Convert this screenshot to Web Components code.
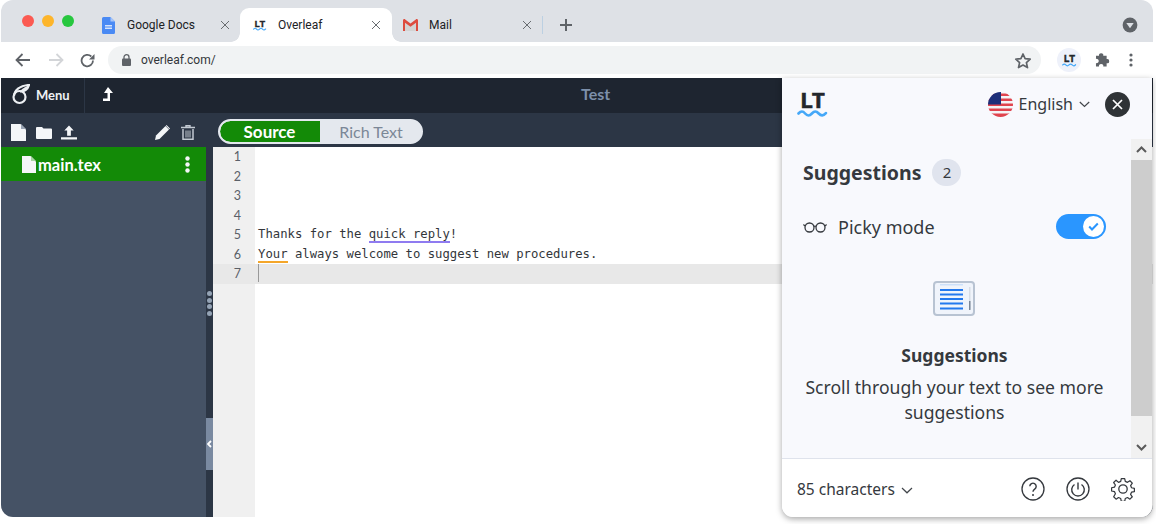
<!DOCTYPE html>
<html>
<head>
<meta charset="utf-8">
<title>Overleaf</title>
<style>
  html, body { margin: 0; background: #fff; }
  body { width: 1156px; height: 524px; overflow: hidden; font-family: Roboto, sans-serif; }
</style>
</head>
<body>
<browser-window>
  <tab-strip slot="tabs">
    <browser-tab icon="docs" label="Google Docs"></browser-tab>
    <browser-tab icon="lt" label="Overleaf" active></browser-tab>
    <browser-tab icon="gmail" label="Mail" last></browser-tab>
  </tab-strip>
  <address-bar slot="address" url="overleaf.com/"></address-bar>
  <overleaf-app slot="page"></overleaf-app>
  <lt-panel slot="overlay"></lt-panel>
</browser-window>

<script>
const LT_LOGO = (w, h) => `
  <svg width="${w}" height="${h}" viewBox="0 0 32 26">
    <text x="3" y="16.500" font-family="Liberation Mono, monospace" font-weight="700" font-size="22" textLength="25" lengthAdjust="spacing" fill="#24272b" stroke="#24272b" stroke-width=".7">LT</text>
    <path d="M1.500 22.500c2.400-2.600 4.400-2.600 6.600 0s4.400 2.600 6.800 0 4.400-2.600 6.800 0 4.600 2.600 7.200-.4" fill="none" stroke="#45a8f8" stroke-width="2.600" stroke-linecap="round"/>
  </svg>`;

class BrowserWindow extends HTMLElement {
  constructor() {
    super();
    this.shadowDOM = this.attachShadow({ mode: 'open' });
  }

  connectedCallback() {
    this.shadowDOM.innerHTML = `
      <style>
        :host { display: flex; flex-direction: column; position: relative; width: 1152px; height: 517px; margin-left: 1px; }
        .top { border-radius: 12px 12px 0 0; overflow: hidden; flex: none; }
        .page { flex: 1; min-height: 0; display: flex; border-radius: 0 0 12px 12px; overflow: hidden; }
        ::slotted([slot=page]) { flex: 1; }
        ::slotted([slot=overlay]) { position: absolute; left: 781px; top: 78px; }
      </style>
      <div class="top"><slot name="tabs"></slot><slot name="address"></slot></div>
      <div class="page"><slot name="page"></slot></div>
      <slot name="overlay"></slot>
    `;
  }
}

class TabStrip extends HTMLElement {
  constructor() {
    super();
    this.shadowDOM = this.attachShadow({ mode: 'open' });
  }

  connectedCallback() {
    this.shadowDOM.innerHTML = `
      <style>
        :host { display: flex; align-items: flex-end; height: 42px; background: #dee1e6; padding-left: 86px; box-sizing: border-box; }
        .lights { position: absolute; left: 21px; top: 15px; display: flex; gap: 8px; }
        .lights i { width: 12px; height: 12px; border-radius: 50%; }
        .sep { width: 1px; height: 18px; background: #bcd0e2; align-self: center; margin: 8px 0 0 0; }
        .plus { margin: 8px 0 0 16px; align-self: center; display: flex; }
        .menu { margin: 8px 15px 0 auto; align-self: center; display: flex; }
      </style>
      <div class="lights">
        <i style="background:#fb5a52"></i><i style="background:#fdb52b"></i><i style="background:#27c73f"></i>
      </div>
      <slot></slot>
      <div class="sep"></div>
      <div class="plus">
        <svg width="14" height="14" viewBox="0 0 14 14"><path d="M7 1v12M1 7h12" stroke="#5f6368" stroke-width="2"/></svg>
      </div>
      <div class="menu">
        <svg width="16" height="16" viewBox="0 0 16 16"><circle cx="8" cy="8" r="7.400" fill="#5f6368"/><path d="M4.300 6h7.400L8 11.200z" fill="#dee1e6"/></svg>
      </div>
    `;
  }
}

class BrowserTab extends HTMLElement {
  constructor() {
    super();
    this.shadowDOM = this.attachShadow({ mode: 'open' });
  }

  icon() {
    const name = this.getAttribute('icon');
    if (name === 'docs') {
      return `<svg width="13" height="17" viewBox="0 0 13 17"><path d="M1.500 0H8.500L13 4.500V15.500a1.500 1.500 0 0 1-1.500 1.500H1.500A1.500 1.500 0 0 1 0 15.500V1.500A1.500 1.500 0 0 1 1.500 0z" fill="#4a8af4"/><path d="M8.500 0L13 4.500H8.500z" fill="#a6c5fa"/><path d="M3 8h7v1.500H3zM3 10.500h7V12H3z" fill="#d5e3fc"/></svg>`;
    }
    if (name === 'lt') {
      return LT_LOGO(14, 12);
    }
    return `<svg width="15" height="12" viewBox="0 0 15 12"><path d="M2 2.500L7.500 6.500 13 2.500V12H2z" fill="#d3d3d3"/><path d="M0 1.500C0 .3 1.200-.3 2.200.4L7.500 4.500 12.800.4c1-.7 2.200-.1 2.200 1.100V12h-2V3.800L7.500 7.800 2 3.800V12H0z" fill="#dd4b3e"/></svg>`;
  }

  connectedCallback() {
    this.shadowDOM.innerHTML = `
      <style>
        :host { display: flex; align-items: center; position: relative; width: 152px; height: 34px; box-sizing: border-box; padding: 0 9px 0 15px; font: 12px Roboto, sans-serif; color: #202124; }
        :host([active]) { background: #fff; border-radius: 9px 9px 0 0; padding: 0 11px 0 13px; margin-left: 1px; }
        :host([last]) { width: 150px; padding: 0 10px 0 11px; }
        :host([active])::before, :host([active])::after { content: ''; position: absolute; bottom: 0; width: 9px; height: 9px; }
        :host([active])::before { left: -9px; background: radial-gradient(circle at 0 0, transparent 8.500px, #fff 9px); }
        :host([active])::after { right: -9px; background: radial-gradient(circle at 100% 0, transparent 8.500px, #fff 9px); }
        .icon { width: 25px; flex: none; display: flex; align-items: center; }
        :host([last]) .icon { width: 26px; }
        .label { flex: 1; white-space: nowrap; }
        .x { flex: none; display: flex; }
      </style>
      <span class="icon">${this.icon()}</span>
      <span class="label">${this.getAttribute('label')}</span>
      <span class="x"><svg width="10" height="10" viewBox="0 0 10 10"><path d="M1 1l8 8M9 1L1 9" stroke="#686c70" stroke-width="1"/></svg></span>
    `;
  }
}

class AddressBar extends HTMLElement {
  constructor() {
    super();
    this.shadowDOM = this.attachShadow({ mode: 'open' });
  }

  connectedCallback() {
    this.shadowDOM.innerHTML = `
      <style>
        :host { display: flex; align-items: center; height: 36px; background: #fff; padding: 0 20px 0 14px; box-sizing: border-box; }
        .nav { display: flex; align-items: center; gap: 17px; width: 93px; flex: none; }
        .nav svg { display: block; }
        .nav svg:last-child { margin-left: -1px; }
        .url { flex: 1; height: 28px; background: #f1f3f4; border-radius: 14px; display: flex; align-items: center; padding: 0 9px 0 14px; box-sizing: border-box; font: 12px Roboto, sans-serif; color: #33363a; }
        .lock { margin-right: 10px; display: flex; }
        .star { margin-left: auto; display: flex; }
        .ext { display: flex; align-items: center; flex: none; margin-left: 16px; }
        .lt { width: 24px; height: 24px; border-radius: 50%; background: #eef1fa; display: flex; align-items: center; justify-content: center; }
        .puzzle { margin-left: 14px; display: flex; }
        .dots { margin-left: 18px; display: flex; }
      </style>
      <div class="nav">
        <svg width="16" height="14" viewBox="0 0 16 14"><path d="M15 7H2M7.500 1L1.500 7l6 6" fill="none" stroke="#5f6368" stroke-width="1.800"/></svg>
        <svg width="16" height="14" viewBox="0 0 16 14"><path d="M1 7h13M8.500 1l6 6-6 6" fill="none" stroke="#d3d5d8" stroke-width="1.800"/></svg>
        <svg width="15" height="15" viewBox="0 0 15 15"><path d="M13 7.500a5.700 5.700 0 1 1-1.700-4" fill="none" stroke="#5f6368" stroke-width="1.800"/><path d="M14.500 1v5.500H9z" fill="#5f6368"/></svg>
      </div>
      <div class="url">
        <span class="lock"><svg width="9" height="12" viewBox="0 0 9 12"><path d="M2 5V3.200a2.500 2.500 0 0 1 5 0V5" fill="none" stroke="#5f6368" stroke-width="1.300"/><rect y="4.500" width="9" height="7.500" rx="1" fill="#5f6368"/></svg></span>
        <span>${this.getAttribute('url')}</span>
        <span class="star"><svg width="18" height="17" viewBox="0 0 18 17"><path d="M9 2l2.100 4.700 5.100.5-3.800 3.400 1.100 5L9 13l-4.500 2.600 1.100-5L1.800 7.200l5.100-.5z" fill="none" stroke="#5f6368" stroke-width="1.700" stroke-linejoin="round"/></svg></span>
      </div>
      <div class="ext">
        <span class="lt">${LT_LOGO(15, 13)}</span>
        <span class="puzzle"><svg width="16" height="16" viewBox="0 0 16 16"><path d="M1 5h3.200a2.200 2.200 0 1 1 4.300 0H12v3.300a2.200 2.200 0 1 1 0 4.300V16H8.500a2.200 2.200 0 1 0-4.300 0H1v-3.600a2.200 2.200 0 1 0 0-4.200z" fill="#5f6368" transform="translate(0 -1) scale(.97)"/></svg></span>
        <span class="dots"><svg width="4" height="14" viewBox="0 0 4 14"><circle cx="2" cy="2" r="1.600" fill="#5f6368"/><circle cx="2" cy="7" r="1.600" fill="#5f6368"/><circle cx="2" cy="12" r="1.600" fill="#5f6368"/></svg></span>
      </div>
    `;
  }
}

class OverleafApp extends HTMLElement {
  constructor() {
    super();
    this.shadowDOM = this.attachShadow({ mode: 'open' });
  }

  connectedCallback() {
    this.shadowDOM.innerHTML = `
      <style>
        :host { display: flex; flex-direction: column; font-family: Lato, sans-serif; min-width: 0; }
        .bar { height: 35px; background: #1e2530; display: flex; align-items: center; flex: none; color: #fff; position: relative; }
        .menu { display: flex; align-items: center; width: 84px; height: 100%; padding: 0 0 2px 10px; box-sizing: border-box; border-right: 1px solid #2c3645; font-size: 13px; font-weight: 700; color: #eef1f4; gap: 6px; }
        .up { margin: 0 0 3px 17px; display: flex; }
        .title { position: absolute; left: 580px; top: 6px; font-size: 16px; font-weight: 700; color: #7d90aa; }
        .main { flex: 1; display: flex; min-height: 0; }
      </style>
      <div class="bar">
        <div class="menu">
          <svg width="19" height="21" viewBox="0 0 19 21"><circle cx="8.500" cy="13" r="6" fill="none" stroke="#eceff2" stroke-width="2.200"/><path d="M3 12C3.500 6 9 1.500 18 1c-1 3.500-3.500 6.500-9 6.500" fill="none" stroke="#eceff2" stroke-width="2.200"/><path d="M9 7c3-3 6-4.500 9-6-1 3.500-4 6-9 6z" fill="#eceff2"/></svg>
          <span>Menu</span>
        </div>
        <span class="up"><svg width="11" height="14" viewBox="0 0 11 14"><path d="M6 0l5 6H8v8H1v-2.500h4.500V6H2z" fill="#fff"/></svg></span>
        <span class="title">Test</span>
      </div>
      <div class="main">
        <file-tree></file-tree>
        <code-editor></code-editor>
      </div>
    `;
  }
}

class FileTree extends HTMLElement {
  constructor() {
    super();
    this.shadowDOM = this.attachShadow({ mode: 'open' });
  }

  connectedCallback() {
    this.shadowDOM.innerHTML = `
      <style>
        :host { display: flex; flex-direction: column; width: 205px; flex: none; background: #455265; font-family: Lato, sans-serif; }
        .tools { height: 34px; background: #2c3645; display: flex; align-items: center; padding: 4px 11px 0 10px; box-sizing: border-box; gap: 10px; flex: none; }
        .tools .right { margin-left: auto; display: flex; gap: 11px; align-items: center; }
        svg { display: block; }
        .file { height: 34px; background: #138a07; display: flex; align-items: center; padding: 1px 16px 0 21px; box-sizing: border-box; color: #fff; font-size: 16.500px; font-weight: 700; }
        .file span { margin-left: 2px; }
        .more { margin-left: auto; }
      </style>
      <div class="tools">
        <svg width="15" height="17" viewBox="0 0 15 17"><path d="M0 0h9.500L15 5.500V17H0z" fill="#f4f6f8"/><path d="M10 0l5 5h-5z" fill="#9aa5b4"/></svg>
        <svg width="16" height="13" viewBox="0 0 16 13"><path d="M0 2a1 1 0 0 1 1-1h5l1.500 1.500H15a1 1 0 0 1 1 1V12a1 1 0 0 1-1 1H1a1 1 0 0 1-1-1z" fill="#f4f6f8"/></svg>
        <svg width="16" height="15" viewBox="0 0 17 15" style="margin-left:-1px"><path d="M8.500 0l5 5.500H10.500V11h-4V5.500H3.500zM0 12.500h17V15H0z" fill="#f4f6f8"/></svg>
        <div class="right">
          <svg width="15" height="15" viewBox="0 0 15 15"><path d="M0 15l1-4.500L10.500 1l3.500 3.500L4.500 14z" fill="#f4f6f8"/><path d="M11.500 0l3.500 3.500-.7.700L10.800.7z" fill="#f4f6f8"/></svg>
          <svg width="14" height="15" viewBox="0 0 14 15"><path d="M0 2.500h14M5 2.500V.800h4v1.700" fill="none" stroke="#c2c9d2" stroke-width="1.400"/><path d="M2 4v10.300h10V4" fill="none" stroke="#c2c9d2" stroke-width="1.500"/><path d="M5 5.500v7M7 5.500v7M9 5.500v7" stroke="#c2c9d2"/></svg>
        </div>
      </div>
      <div class="file">
        <svg width="14" height="17" viewBox="0 0 14 17"><path d="M0 0h8.500L14 5.500V17H0z" fill="#f4f6f8"/><path d="M9 0l5 5H9z" fill="#a6d3a2"/></svg>
        <span>main.tex</span>
        <svg class="more" width="5" height="17" viewBox="0 0 5 17"><circle cx="2.500" cy="2.500" r="2.200" fill="#f4f6f8"/><circle cx="2.500" cy="8.500" r="2.200" fill="#f4f6f8"/><circle cx="2.500" cy="14.500" r="2.200" fill="#f4f6f8"/></svg>
      </div>
    `;
  }
}

class CodeEditor extends HTMLElement {
  constructor() {
    super();
    this.shadowDOM = this.attachShadow({ mode: 'open' });
  }

  connectedCallback() {
    const lines = [
      '', '', '', '',
      'Thanks for the <u class="style">quick reply</u>!',
      '<u class="grammar">Your</u> always welcome to suggest new procedures.',
      '<i class="caret"></i>',
    ];
    const rows = lines.map((text, i) => `
      <div class="row${i === 6 ? ' current' : ''}"><span class="num">${i + 1}</span><span class="code">${text}</span></div>`).join('');
    this.shadowDOM.innerHTML = `
      <style>
        :host { display: flex; flex: 1; min-width: 0; background: #2c3645; }
        .handle { width: 7px; flex: none; position: relative; }
        .grip { position: absolute; top: 178px; left: 1px; display: flex; flex-direction: column; gap: 1.500px; }
        .grip i { width: 5px; height: 5px; border-radius: 50%; background: #94a3b5; }
        .toggle { position: absolute; left: 0; top: 305px; width: 7px; height: 52px; background: #7a8aa1; color: #fff; display: flex; align-items: center; justify-content: center; }
        .pane { flex: 1; display: flex; flex-direction: column; min-width: 0; }
        .tabs { height: 34px; flex: none; padding-left: 5px; box-sizing: border-box; display: flex; align-items: flex-start; padding-top: 6px; }
        .pill { display: flex; width: 205px; height: 25px; box-sizing: border-box; border: 2px solid #e4e8ee; border-radius: 13px; background: #e4e8ee; overflow: hidden; font-size: 16px; line-height: 21px; text-align: center; }
        .source { width: 100px; background: #138a07; color: #fff; font-weight: 700; font-size: 17px; padding-right: 1px; box-sizing: border-box; border-radius: 11px 0 0 11px; }
        .rich { flex: 1; color: #7b8797; padding-left: 1px; }
        .lines { flex: 1; background: #fff; position: relative; font: 12.250px/19.500px "DejaVu Sans Mono", monospace; color: #33363a; }
        .gutter-bg { position: absolute; left: 0; top: 0; bottom: 0; width: 42px; background: #f0f0f0; }
        .row { display: flex; height: 19.500px; position: relative; white-space: pre; }
        .row.current { background: #e8e8e8; }
        .num { width: 28px; flex: none; text-align: right; color: #5a6068; font-family: Lato, sans-serif; font-size: 12.500px; }
        .code { margin-left: 17px; }
        u { text-decoration: none; display: inline-block; position: relative; }
        u::after { content: ''; position: absolute; left: 0; right: 0; bottom: 1.500px; height: 2px; }
        u.style::after { background: #8f7bf0; }
        u.grammar::after { background: #f4a62a; }
        .caret { display: inline-block; width: 1px; height: 18px; background: #999; vertical-align: top; }
      </style>
      <div class="handle">
        <div class="grip"><i></i><i></i><i></i><i></i></div>
        <div class="toggle"><svg width="5" height="8" viewBox="0 0 5 8"><path d="M4 1L1 4l3 3" fill="none" stroke="#fff" stroke-width="1.800"/></svg></div>
      </div>
      <div class="pane">
        <div class="tabs">
          <div class="pill"><span class="source">Source</span><span class="rich">Rich Text</span></div>
        </div>
        <div class="lines"><div class="gutter-bg"></div>${rows}</div>
      </div>
    `;
  }
}

class ToggleSwitch extends HTMLElement {
  constructor() {
    super();
    this.shadowDOM = this.attachShadow({ mode: 'open' });
  }

  connectedCallback() {
    this.shadowDOM.innerHTML = `
      <style>
        :host { display: flex; align-items: center; justify-content: flex-end; width: 50px; height: 25px; border-radius: 13px; background: #2a96ff; padding: 2px; box-sizing: border-box; flex: none; }
        .knob { width: 21px; height: 21px; border-radius: 50%; background: #fff; display: flex; align-items: center; justify-content: center; }
      </style>
      <span class="knob"><svg width="11" height="9" viewBox="0 0 11 9"><path d="M1.200 4.500L4 7.500 9.800 1.500" fill="none" stroke="#2a96ff" stroke-width="2"/></svg></span>
    `;
  }
}

class LtPanel extends HTMLElement {
  constructor() {
    super();
    this.shadowDOM = this.attachShadow({ mode: 'open' });
  }

  connectedCallback() {
    this.shadowDOM.innerHTML = `
      <style>
        :host { display: flex; flex-direction: column; width: 370px; height: 439px; background: #f8f9fd; border-radius: 0 0 11px 11px; box-shadow: 0 2px 6px rgba(0,0,0,.35); font-family: "Noto Sans", sans-serif; color: #35393e; }
        .head { height: 61px; flex: none; display: flex; align-items: center; padding: 0 22px 9px 15px; box-sizing: border-box; }
        .lang { margin-left: auto; display: flex; align-items: center; font-size: 16px; }
        .flag { display: flex; margin-right: 6px; }
        .lang .chev { margin: 1px 0 0 6px; display: flex; }
        .close { width: 25px; height: 25px; border-radius: 50%; background: #2f3336; display: flex; align-items: center; justify-content: center; margin-left: 15px; }
        .body { flex: 1; display: flex; min-height: 0; }
        .content { flex: 1; display: flex; flex-direction: column; padding: 0 25px 0 21px; box-sizing: border-box; min-width: 0; }
        .title { display: flex; align-items: center; height: 30px; margin-top: 18px; gap: 11px; font-size: 19.500px; font-weight: 700; }
        .count { width: 29px; height: 27px; border-radius: 14px; background: #e0e4ee; font-size: 15px; font-weight: 400; display: flex; align-items: center; justify-content: center; }
        .picky { display: flex; align-items: center; height: 25px; margin-top: 27px; font-size: 18px; }
        .picky svg { margin-right: 11px; }
        .picky toggle-switch { margin-left: auto; }
        .empty { display: flex; flex-direction: column; align-items: center; text-align: center; margin-top: 42px; }
        .empty svg { margin-left: -2px; }
        .empty h3 { margin: 27px 0 0; font-size: 17.500px; line-height: 24px; font-weight: 700; }
        .empty p { margin: 8px 0 0; font-size: 17.600px; line-height: 25px; }
        .scroll { width: 21px; flex: none; background: #f1f1f1; display: flex; flex-direction: column; }
        .scroll .btn { height: 21px; display: flex; align-items: center; justify-content: center; flex: none; }
        .scroll .thumb { height: 256px; background: #cdcdcd; flex: none; }
        .scroll .rest { flex: 1; }
        .foot { height: 59px; flex: none; background: #fff; border-top: 1px solid #dfe3ec; border-radius: 0 0 11px 11px; display: flex; align-items: center; padding: 2px 17px 0 15px; box-sizing: border-box; font-size: 15.500px; }
        .foot .chev { margin: 2px 0 0 6px; display: flex; }
        .foot .icons { margin-left: auto; display: flex; gap: 21px; align-items: center; }
        svg { display: block; }
      </style>
      <div class="head">
        ${LT_LOGO(32, 26)}
        <div class="lang">
          <span class="flag"><svg width="25" height="25" viewBox="0 0 25 25"><defs><clipPath id="c"><circle cx="12.500" cy="12.500" r="12.500"/></clipPath></defs><g clip-path="url(#c)"><rect width="25" height="25" fill="#f4f4f6"/><path d="M0 1.500h25v2.500H0zM0 6.500h25V9H0zM0 11.500h25V14H0zM0 16.500h25V19H0zM0 21.500h25V25H0z" fill="#e0444e"/><rect width="13" height="12.500" fill="#1d2f7a"/></g></svg></span>
          <span>English</span>
          <span class="chev"><svg width="11" height="7" viewBox="0 0 11 7"><path d="M.8 1l4.700 4.500L10.200 1" fill="none" stroke="#42464b" stroke-width="1.200"/></svg></span>
        </div>
        <span class="close"><svg width="11" height="11" viewBox="0 0 11 11"><path d="M1 1l9 9M10 1l-9 9" stroke="#fff" stroke-width="1.700"/></svg></span>
      </div>
      <div class="body">
        <div class="content">
          <div class="title"><span>Suggestions</span><span class="count">2</span></div>
          <div class="picky">
            <svg width="24" height="12" viewBox="0 0 24 12"><circle cx="6.500" cy="6.500" r="4.500" fill="none" stroke="#35393e" stroke-width="1.300"/><circle cx="17.500" cy="6.500" r="4.500" fill="none" stroke="#35393e" stroke-width="1.300"/><path d="M11 5.500c.6-.5 1.400-.5 2 0M2 5L.4 3.500M22 5l1.600-1.500" fill="none" stroke="#35393e" stroke-width="1.200"/></svg>
            <span>Picky mode</span>
            <toggle-switch></toggle-switch>
          </div>
          <div class="empty">
            <svg width="42" height="35" viewBox="0 0 42 35"><rect x="1" y="1" width="40" height="33" rx="3" fill="#f0f4fb" stroke="#b8c3d2" stroke-width="2"/><path d="M7 9h23M7 13.500h23M7 18h23M7 22.500h23M7 27.500h23" stroke="#2379ee" stroke-width="2"/><path d="M7 3.800h23" stroke="#bcd7f8" stroke-width="1"/><rect x="36" y="6" width="1.500" height="22" fill="#d7dde6"/><rect x="36" y="20" width="1.500" height="9" fill="#7b8797"/></svg>
            <h3>Suggestions</h3>
            <p>Scroll through your text to see more suggestions</p>
          </div>
        </div>
        <div class="scroll">
          <div class="btn"><svg width="11" height="7" viewBox="0 0 11 7"><path d="M1 6l4.500-4.500L10 6" fill="none" stroke="#5a5a5a" stroke-width="2"/></svg></div>
          <div class="thumb"></div>
          <div class="rest"></div>
          <div class="btn"><svg width="11" height="7" viewBox="0 0 11 7"><path d="M1 1l4.500 4.500L10 1" fill="none" stroke="#5a5a5a" stroke-width="2"/></svg></div>
        </div>
      </div>
      <div class="foot">
        <span>85 characters</span>
        <span class="chev"><svg width="12" height="7" viewBox="0 0 12 7"><path d="M1 1l5 4.800L11 1" fill="none" stroke="#42464b" stroke-width="1.200"/></svg></span>
        <div class="icons">
          <svg width="24" height="24" viewBox="0 0 24 24"><circle cx="12" cy="12" r="11" fill="none" stroke="#35393e" stroke-width="1.300"/><path d="M8.800 9.300a3.200 3.200 0 1 1 4.900 2.800c-1.100.8-1.700 1.300-1.700 2.700" fill="none" stroke="#35393e" stroke-width="1.400"/><circle cx="12" cy="18" r="1" fill="#35393e"/></svg>
          <svg width="24" height="24" viewBox="0 0 24 24"><circle cx="12" cy="12" r="11" fill="none" stroke="#35393e" stroke-width="1.300"/><path d="M8.500 7.500a6.300 6.300 0 1 0 7 0M12 5.500v7" fill="none" stroke="#35393e" stroke-width="1.400"/></svg>
          <svg width="24" height="24" viewBox="0 0 24 24"><path d="M10.200 1h3.600l.6 3 2.300 1 2.600-1.700 2.500 2.500L20 8.400l1 2.300 3 .6v3.400l-3 .6-1 2.300 1.800 2.600-2.500 2.500-2.600-1.700-2.300 1-.6 3h-3.600l-.6-3-2.300-1-2.600 1.700-2.500-2.500L4 17l-1-2.300-3-.6v-3.400l3-.6 1-2.300-1.800-2.600 2.500-2.500L7.300 5l2.300-1z" transform="translate(.6 .6) scale(.95)" fill="none" stroke="#35393e" stroke-width="1.300" stroke-linejoin="round"/><circle cx="12" cy="12" r="4.200" fill="none" stroke="#35393e" stroke-width="1.300"/></svg>
        </div>
      </div>
    `;
  }
}

customElements.define('browser-window', BrowserWindow);
customElements.define('tab-strip', TabStrip);
customElements.define('browser-tab', BrowserTab);
customElements.define('address-bar', AddressBar);
customElements.define('overleaf-app', OverleafApp);
customElements.define('file-tree', FileTree);
customElements.define('code-editor', CodeEditor);
customElements.define('toggle-switch', ToggleSwitch);
customElements.define('lt-panel', LtPanel);
</script>
</body>
</html>
